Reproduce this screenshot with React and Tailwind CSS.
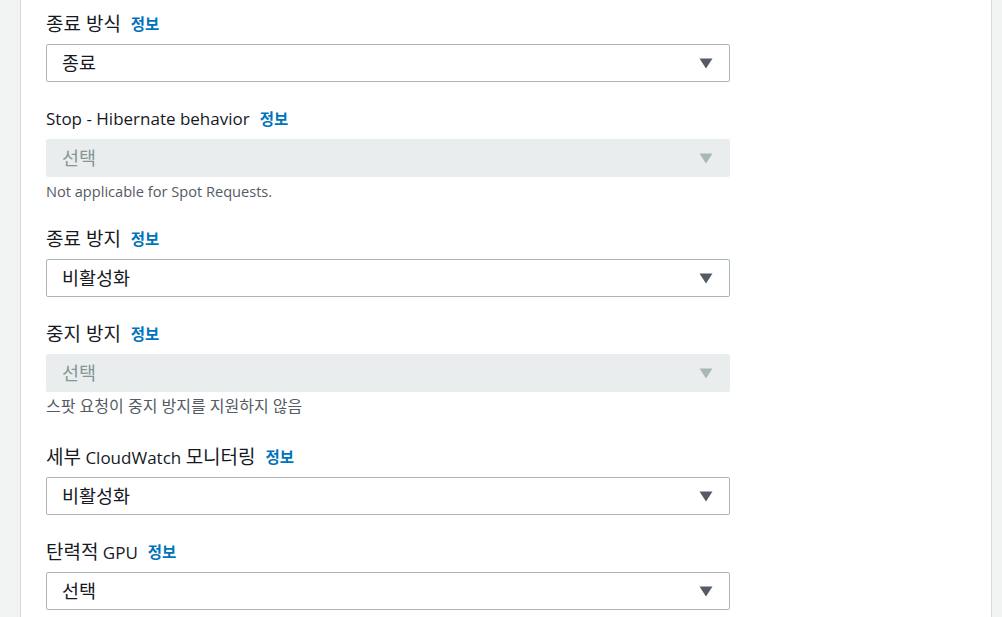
const KO = /([\u3131-\uD79D][\u3131-\uD79D\s]*[\u3131-\uD79D]|[\u3131-\uD79D])/;

// Hangul runs are drawn a little larger so their width matches the reference
const Mixed = ({ text, ko }) => (
  <>
    {text.split(KO).map((part, i) =>
      KO.test(part) && /^[\u3131-\uD79D\s]+$/.test(part) ? (
        <span key={i} className={ko}>{part}</span>
      ) : (
        <span key={i}>{part}</span>
      )
    )}
  </>
);

const Arrow = ({ disabled }) => (
  <svg width="14" height="11" viewBox="0 0 14 11" className="shrink-0">
    <path d="M0.5 0.5 L13.5 0.5 L7 10.5 Z" fill={disabled ? "#aab7b8" : "#545b64"} />
  </svg>
);

const Select = ({ value, disabled }) => (
  <div
    className={
      "w-[684px] h-[38px] flex items-center justify-between pl-[15px] pr-[16px] rounded-[2px] leading-[22px] " +
      (disabled
        ? "bg-[#eaeded] border border-[#eaeded] text-[#879596]"
        : "bg-white border border-[#aab7b8] text-[#16191f]")
    }
  >
    <span className="text-[18.5px]">{value}</span>
    <Arrow disabled={disabled} />
  </div>
);

const Field = ({ label, value, disabled, help, top }) => (
  <div className={"flex flex-col " + top}>
    <div className="flex items-center h-[22px] gap-[10px] text-[17px] leading-[22px] text-[#16191f] mb-[9px]">
      <span className="whitespace-nowrap">
        <Mixed text={label} ko="text-[19px]" />
      </span>
      <span className="text-[15.5px] font-semibold text-[#0073bb]">정보</span>
    </div>
    <Select value={value} disabled={disabled} />
    {help && (
      <div className="h-[20px] mt-[4px] text-[14.6px] leading-[20px] text-[#545b64] whitespace-nowrap">
        <Mixed text={help} ko="text-[16px]" />
      </div>
    )}
  </div>
);

export default function App() {
  const font = { fontFamily: '"Open Sans", "Noto Sans CJK KR", sans-serif' };
  return (
    <div className="w-[1002px] h-[617px] overflow-hidden bg-[#f2f3f3] flex" style={font}>
      <div className="w-[20px] shrink-0" />
      <div className="w-[972px] shrink-0 bg-white border-x border-[#d5dbdb] pl-[25px] pt-[13px] flex flex-col">
        <Field top="" label="종료 방식" value="종료" />
        <Field top="mt-[26px]" label="Stop - Hibernate behavior" value="선택" disabled help="Not applicable for Spot Requests." />
        <Field top="mt-[27px]" label="종료 방지" value="비활성화" />
        <Field top="mt-[26px]" label="중지 방지" value="선택" disabled help="스팟 요청이 중지 방지를 지원하지 않음" />
        <Field top="mt-[30px]" label="세부 CloudWatch 모니터링" value="비활성화" />
        <Field top="mt-[26px]" label="탄력적 GPU" value="선택" />
      </div>
    </div>
  );
}
